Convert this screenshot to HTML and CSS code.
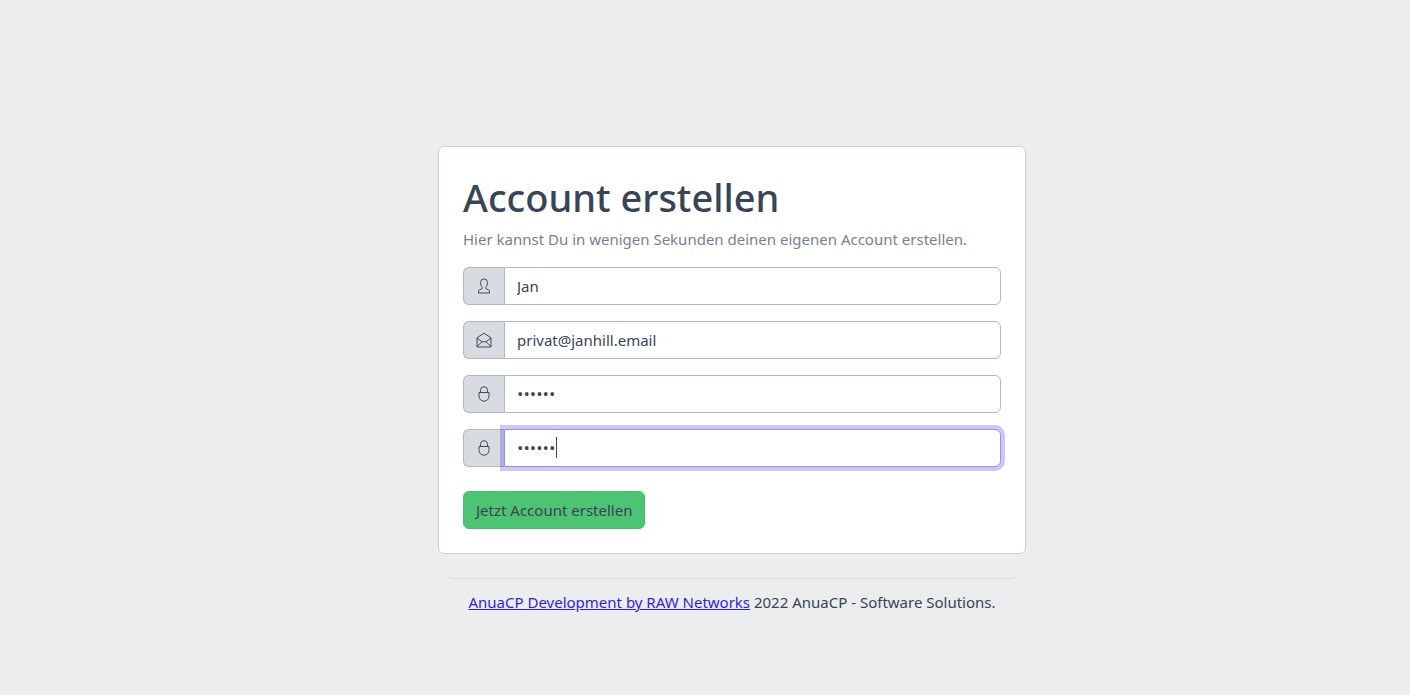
FILE: index.html
```html
<!DOCTYPE html>
<html lang="de">
<head>
    <meta charset="UTF-8">
    <meta name="viewport" content="width=device-width, initial-scale=1.0">
    <title>AnuaCP | Account erstellen</title>
    <link rel="stylesheet" href="styles.css">
</head>
<body>
    <div class="wrapper">
        <main class="card">
            <form action="#" method="post">
                <h1>Account erstellen</h1>
                <p class="intro">Hier kannst Du in wenigen Sekunden deinen eigenen Account erstellen.</p>

                <div class="input-group">
                    <label class="input-icon" for="username" aria-label="Benutzername">
                        <svg class="icon" viewBox="0 0 16 16" aria-hidden="true"><path d="M6.300 9.500C5.200 8.400 4.600 6.700 4.600 4.300a3.400 3.400 0 0 1 6.800 0c0 2.400-.6 4.100-1.700 5.200v1l3.800 2v2.500h-11v-2.500l3.800-2z"/></svg>
                    </label>
                    <input type="text" id="username" name="username" value="Jan">
                </div>

                <div class="input-group">
                    <label class="input-icon" for="email" aria-label="E-Mail">
                        <svg class="icon" viewBox="0 0 16 16" aria-hidden="true"><path d="M1 5.800 8 1.200l7 4.600v9.200H1zM1 6l5 3.800h4l5-3.800M1 14.500l5-4.700M15 14.500l-5-4.700"/></svg>
                    </label>
                    <input type="email" id="email" name="email" value="privat@janhill.email">
                </div>

                <div class="input-group">
                    <label class="input-icon" for="password" aria-label="Passwort">
                        <svg class="icon" viewBox="0 0 16 16" aria-hidden="true"><path d="M3 6.500h10v3.700a5 5 0 0 1-10 0zM4.500 6.500V4.200a3.500 3.500 0 0 1 7 0v2.300"/></svg>
                    </label>
                    <input type="password" id="password" name="password" value="geheim">
                </div>

                <div class="input-group last">
                    <label class="input-icon" for="password-repeat" aria-label="Passwort wiederholen">
                        <svg class="icon" viewBox="0 0 16 16" aria-hidden="true"><path d="M3 6.500h10v3.700a5 5 0 0 1-10 0zM4.500 6.500V4.200a3.500 3.500 0 0 1 7 0v2.300"/></svg>
                    </label>
                    <input type="password" id="password-repeat" name="password_repeat" value="geheim" autofocus>
                    <span class="caret"></span>
                </div>

                <button class="btn-success" type="submit">Jetzt Account erstellen</button>
            </form>
        </main>

        <footer class="footer">
            <a href="#">AnuaCP Development by RAW Networks</a> 2022 AnuaCP - Software Solutions.
        </footer>
    </div>

    <script>
        // Cursor ans Ende des letzten Feldes setzen
        const repeat = document.getElementById('password-repeat');
        repeat.focus();
        repeat.setSelectionRange(repeat.value.length, repeat.value.length);
    </script>
</body>
</html>
```
FILE: styles.css
```css
* {
    box-sizing: border-box;
}
body {
    margin: 0;
    min-height: 100vh;
    padding: 146px 24px 24px 78px;
    background: #ebedef;
    color: #384457;
    font-family: "Segoe UI", "Noto Sans", sans-serif;
    font-size: 15px;
    line-height: 24px;
}
.wrapper {
    max-width: 588px;
    margin: 0 auto;
}
.card {
    padding: 24px;
    background: #fff;
    border: 1px solid #cdcfd4;
    border-radius: 6px;
}
h1 {
    margin: 0 0 4px;
    font-size: 38px;
    font-weight: 500;
    line-height: 52px;
    color: #384457;
}
.intro {
    margin: 0 0 16px;
    color: #768192;
}
.input-group {
    position: relative;
    display: flex;
    height: 38px;
    margin-bottom: 16px;
}
.input-group.last {
    margin-bottom: 24px;
}
.input-icon {
    display: flex;
    align-items: center;
    padding: 0 12px;
    background: #d8dbe0;
    border: 1px solid #b1b7c1;
    border-right: 0;
    border-radius: 6px 0 0 6px;
}
.icon {
    width: 16px;
    height: 16px;
    fill: none;
    stroke: #3c4b64;
}
input {
    flex: 1;
    min-width: 0;
    padding: 6px 12px;
    background: #fff;
    border: 1px solid #b1b7c1;
    border-radius: 0 6px 6px 0;
    color: #384457;
    font: inherit;
}
input[type="password"] {
    font-family: "Segoe UI", "Open Sans", sans-serif;
    font-size: 17px;
}
input:focus {
    border-color: #998fed;
    outline: 0;
    box-shadow: 0 0 0 4px rgba(50, 31, 219, 0.25);
    caret-color: transparent;
}
.caret {
    display: none;
    position: absolute;
    top: 8px;
    left: 93px;
    width: 1px;
    height: 21px;
    background: #384457;
}
input:focus + .caret {
    display: block;
}
.btn-success {
    display: block;
    height: 38px;
    padding: 0 12px;
    background: #4dc374;
    border: 1px solid #43bf6c;
    border-radius: 6px;
    color: #384457;
    font: inherit;
    cursor: pointer;
}
.footer {
    margin: 24px 11px 0;
    padding-top: 11px;
    border-top: 1px solid #d8dadd;
    text-align: center;
}
.footer a {
    color: #321fdb;
}
```
